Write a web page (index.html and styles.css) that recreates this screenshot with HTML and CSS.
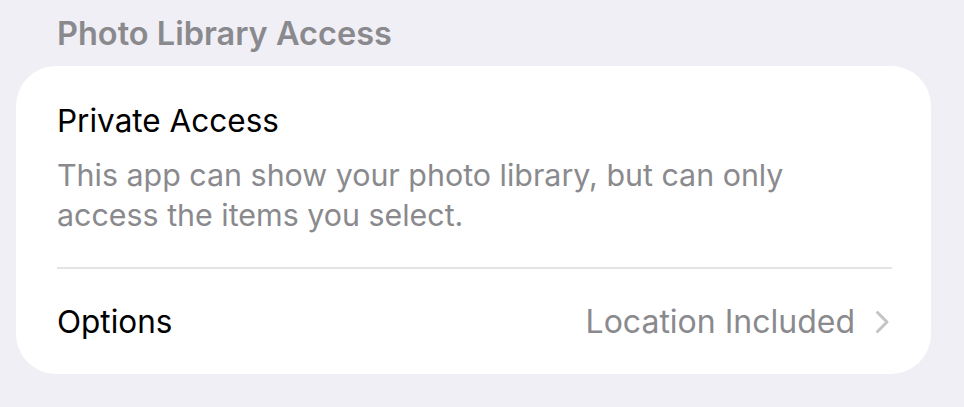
FILE: index.html
```html
<!DOCTYPE html>
<html lang="en">
<head>
<meta charset="utf-8">
<link rel="stylesheet" href="styles.css">
</head>
<body>
<div class="page">
  <div class="section-header">Photo Library Access</div>
  <div class="card">
    <div class="cell cell-info">
      <div class="cell-title">Private Access</div>
      <div class="cell-desc">This app can show your photo library, but can only access the items you select.</div>
    </div>
    <div class="separator"></div>
    <div class="cell cell-row">
      <div class="cell-title">Options</div>
      <div class="cell-value">
        <span>Location Included</span>
        <svg class="chevron" width="15" height="24" viewBox="0 0 15 24"><path d="M2.5 2.5 L12 12 L2.5 21.5" fill="none" stroke="#c4c4c7" stroke-width="3" stroke-linecap="round" stroke-linejoin="round"/></svg>
      </div>
    </div>
  </div>
</div>
</body>
</html>
```
FILE: styles.css
```css
html, body {
  margin: 0;
  padding: 0;
}
body {
  background: #f0eff5;
  font-family: Inter, "Noto Sans", sans-serif;
  width: 964px;
  height: 407px;
  overflow: hidden;
}
.page {
  padding-top: 14px;
}
.section-header {
  padding-left: 57px;
  font-size: 32.5px;
  font-weight: 600;
  color: #8a8a8e;
  line-height: 40px;
  height: 52px;
}
.card {
  margin-left: 16px;
  width: 915px;
  background: #fff;
  border-radius: 40px;
  box-sizing: border-box;
  padding: 0 41px 0 41px;
}
.cell-info {
  padding-top: 35px;
  padding-bottom: 32px;
}
.cell-title {
  font-size: 31.5px;
  color: #000;
  line-height: 40px;
}
.cell-desc {
  margin-top: 14px;
  font-size: 30.4px;
  line-height: 40px;
  color: #8a8a8e;
  width: 760px;
}
.separator {
  height: 2px;
  margin-right: -2px;
  background: #e4e4e7;
}
.cell-row {
  display: flex;
  align-items: center;
  justify-content: space-between;
  height: 105px;
}
.cell-value {
  display: flex;
  align-items: center;
  gap: 20px;
  font-size: 32px;
  color: #8a8a8e;
}
.chevron {
  display: block;
}
```
